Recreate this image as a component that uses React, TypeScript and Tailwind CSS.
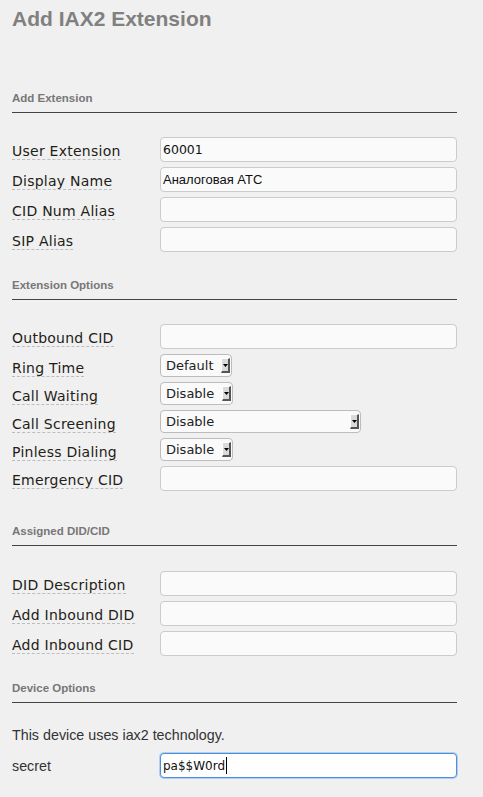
import type { ReactNode } from 'react';

const LABEL_FONT = { fontFamily: '"DejaVu Sans", Verdana, sans-serif' };

function SectionHeading({ title, className }: { title: string; className: string }) {
  return (
    <div
      className={`${className} border-b border-[#444] pb-[6px] text-[11.5px] font-bold leading-[16px] text-[#777]`}
      style={{ fontFamily: '"Liberation Sans", Arial, sans-serif' }}
    >
      {title}
    </div>
  );
}

function Row({ label, children }: { label: string; children: ReactNode }) {
  return (
    <div className="flex items-start">
      <div className="w-[148px] shrink-0 pt-[7px] text-[14px] leading-[15px] tracking-[0.25px]" style={LABEL_FONT}>
        <span className="inline-block border-b border-dashed border-[#bdbdbd] text-[#231d16]">
          {label}
        </span>
      </div>
      {children}
    </div>
  );
}

function TextBox({ value, cyrillic }: { value?: string; cyrillic?: boolean }) {
  return (
    <div
      className={`flex h-[25px] w-[297px] items-center rounded-[4px] border border-[#cbcbcb] bg-[#fafafa] px-[2px] leading-[16px] text-[#111] ${cyrillic ? 'text-[13px]' : 'text-[12.5px]'}`}
      style={cyrillic ? { fontFamily: '"Liberation Sans", Arial, sans-serif' } : LABEL_FONT}
    >
      {value}
    </div>
  );
}

function Dropdown({ value, width }: { value: string; width: string }) {
  return (
    <div
      className={`${width} flex h-[23px] items-center justify-between rounded-[4px] border border-[#bcbcbc] bg-[#fafafa] pl-[5px] pr-[1px] text-[13px] leading-[16px] text-[#222]`}
      style={LABEL_FONT}
    >
      <span>{value}</span>
      <span className="flex h-[15px] w-[9px] items-center justify-center border-b-2 border-r-2 border-l border-t border-b-[#555] border-l-white border-r-[#555] border-t-white bg-[#dadada]">
        <svg width="5" height="3" viewBox="0 0 5 3">
          <path d="M0 0h5L2.5 3z" fill="#000" />
        </svg>
      </span>
    </div>
  );
}

export default function App() {
  return (
    <div className="min-h-[797px] w-full bg-[#f0f0f0] pt-[7px]">
      <div className="ml-[12px] w-[445px]">
        <h1
          className="text-[21px] font-bold leading-[24px] text-[#808080]"
          style={{ fontFamily: '"Liberation Sans", Arial, sans-serif' }}
        >
          Add IAX2 Extension
        </h1>

        <SectionHeading title="Add Extension" className="mt-[59px]" />
        <div className="mt-[24px] flex flex-col gap-[5px]">
          <Row label="User Extension"><TextBox value="60001" /></Row>
          <Row label="Display Name"><TextBox value="Аналоговая АТС" cyrillic /></Row>
          <Row label="CID Num Alias"><TextBox /></Row>
          <Row label="SIP Alias"><TextBox /></Row>
        </div>

        <SectionHeading title="Extension Options" className="mt-[25px]" />
        <div className="mt-[24px] flex flex-col gap-[5px]">
          <Row label="Outbound CID"><TextBox /></Row>
          <Row label="Ring Time"><Dropdown value="Default" width="w-[72px]" /></Row>
          <Row label="Call Waiting"><Dropdown value="Disable" width="w-[73px]" /></Row>
          <Row label="Call Screening"><Dropdown value="Disable" width="w-[201px]" /></Row>
          <Row label="Pinless Dialing"><Dropdown value="Disable" width="w-[73px]" /></Row>
          <Row label="Emergency CID"><TextBox /></Row>
        </div>

        <SectionHeading title="Assigned DID/CID" className="mt-[32px]" />
        <div className="mt-[25px] flex flex-col gap-[5px]">
          <Row label="DID Description"><TextBox /></Row>
          <Row label="Add Inbound DID"><TextBox /></Row>
          <Row label="Add Inbound CID"><TextBox /></Row>
        </div>

        <SectionHeading title="Device Options" className="mt-[24px]" />
        <div style={{ fontFamily: '"Liberation Sans", Arial, sans-serif' }}>
          <p className="mt-[22px] text-[14.3px] leading-[20px] text-[#333]">
            This device uses iax2 technology.
          </p>
          <div className="mt-[8px] flex items-center">
            <div className="w-[148px] shrink-0 text-[14.3px] leading-[20px] text-[#333]">secret</div>
            <div
              className="flex h-[25px] w-[297px] items-center rounded-[4px] border border-[#4a90e2] bg-white px-[2px] text-[12px] leading-[16px] text-[#111] shadow-[0_0_0_1px_rgba(74,144,226,0.35)]"
              style={LABEL_FONT}
            >
              pa$$W0rd
              <span className="ml-[1px] inline-block h-[17px] w-px bg-black" />
            </div>
          </div>
        </div>
      </div>
    </div>
  );
}
